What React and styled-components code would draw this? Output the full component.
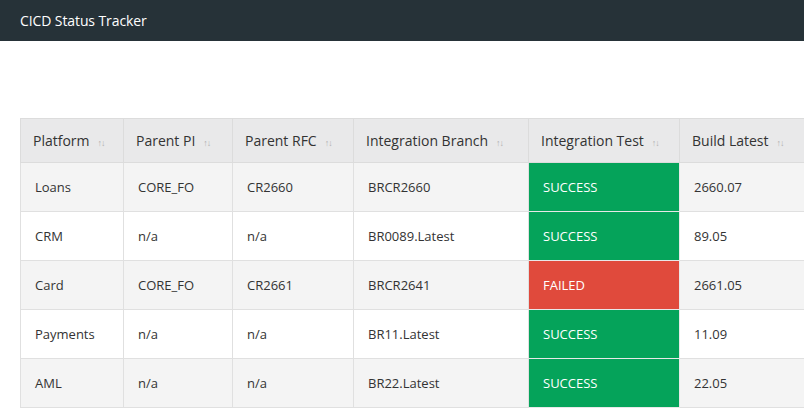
import React from "react";
import styled, { createGlobalStyle } from "styled-components";

const Global = createGlobalStyle`
  body { margin: 0; font-family: "Open Sans", "Liberation Sans", sans-serif; background: #fff; overflow: hidden; }
`;
const Bar = styled.header`
  height: 41px; background: #263238; color: #fff; display: flex; align-items: center;
  padding-left: 20px; font-size: 14px; letter-spacing: -0.1px;
`;
const Wrap = styled.div`padding: 77px 0 0 20px; overflow: hidden;`;
const Table = styled.table`
  border-collapse: collapse; table-layout: fixed; width: 880px; font-size: 13px; color: #333;
`;
const Th = styled.th`
  background: #e9e9ea; height: 43px; text-align: left; font-weight: 400; font-size: 14px; color: #333;
  padding: 0 12px; border: 1px solid #dcdcdc; white-space: nowrap;
`;
const Sort = styled.span`color: #b0b0b0; font-size: 9px; margin-left: 8px; letter-spacing: -1px;`;
const Tr = styled.tr`background: ${p => (p.$odd ? "#f4f4f4" : "#fff")};`;
const Td = styled.td`
  height: 48px; padding: 0 14px; border: 1px solid #e0e0e0; white-space: nowrap;
  ${p => p.$status && `background: ${p.$status === "FAILED" ? "#e04a3c" : "#05a35a"}; color: #fff; border-color: #e8e8e8;`}
`;

const cols = [["Platform", 103], ["Parent PI", 109], ["Parent RFC", 121], ["Integration Branch", 175], ["Integration Test", 151], ["Build Latest", 221]];
const rows = [
  ["Loans", "CORE_FO", "CR2660", "BRCR2660", "SUCCESS", "2660.07"],
  ["CRM", "n/a", "n/a", "BR0089.Latest", "SUCCESS", "89.05"],
  ["Card", "CORE_FO", "CR2661", "BRCR2641", "FAILED", "2661.05"],
  ["Payments", "n/a", "n/a", "BR11.Latest", "SUCCESS", "11.09"],
  ["AML", "n/a", "n/a", "BR22.Latest", "SUCCESS", "22.05"],
];

export default function App() {
  return (
    <>
      <Global />
      <Bar>CICD Status Tracker</Bar>
      <Wrap>
        <Table>
          <colgroup>{cols.map(([c, w]) => <col key={c} style={{ width: w }} />)}</colgroup>
          <thead><tr>{cols.map(([c]) => <Th key={c}>{c}<Sort>↑↓</Sort></Th>)}</tr></thead>
          <tbody>
            {rows.map((r, i) => (
              <Tr key={i} $odd={i % 2 === 0}>
                {r.map((v, j) => <Td key={j} $status={j === 4 ? v : undefined}>{v}</Td>)}
              </Tr>
            ))}
          </tbody>
        </Table>
      </Wrap>
    </>
  );
}
